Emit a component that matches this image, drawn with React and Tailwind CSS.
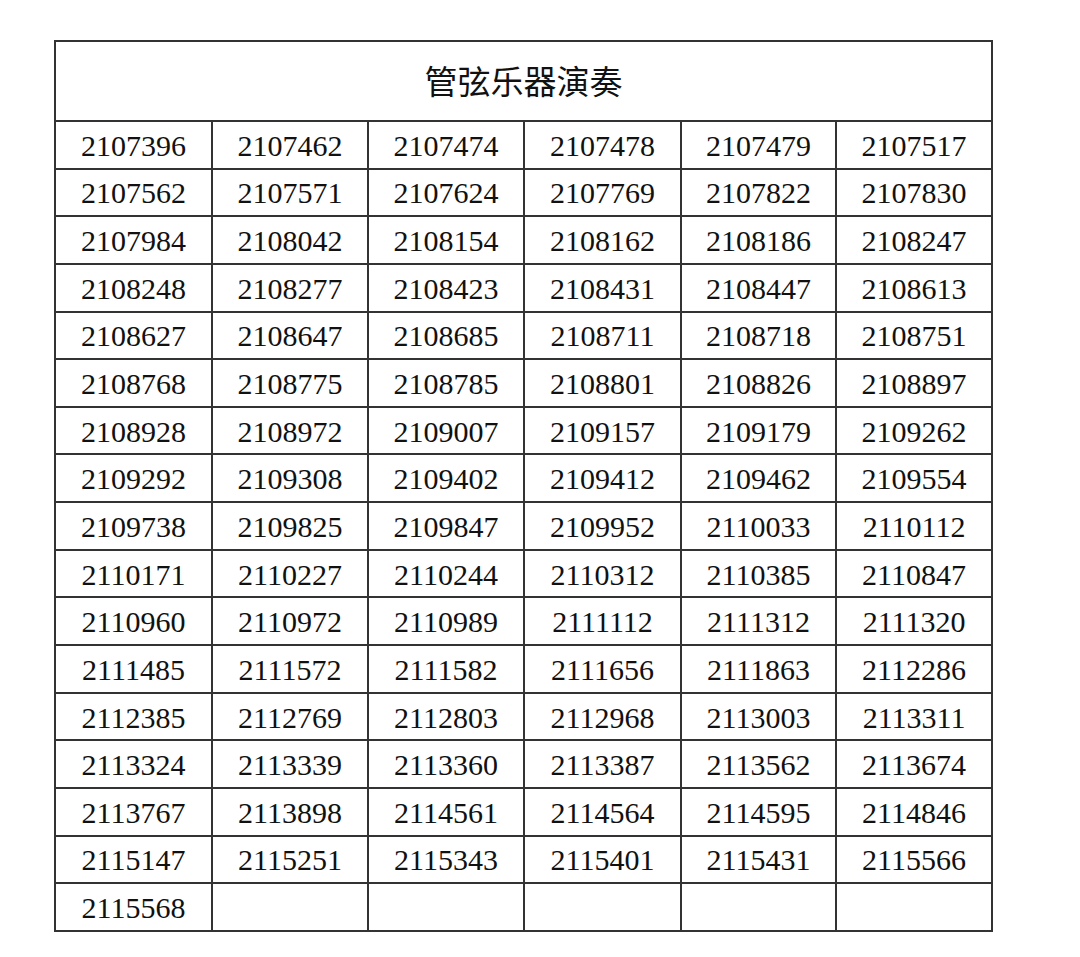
import React from 'react';

const rows = [
  ['2107396', '2107462', '2107474', '2107478', '2107479', '2107517'],
  ['2107562', '2107571', '2107624', '2107769', '2107822', '2107830'],
  ['2107984', '2108042', '2108154', '2108162', '2108186', '2108247'],
  ['2108248', '2108277', '2108423', '2108431', '2108447', '2108613'],
  ['2108627', '2108647', '2108685', '2108711', '2108718', '2108751'],
  ['2108768', '2108775', '2108785', '2108801', '2108826', '2108897'],
  ['2108928', '2108972', '2109007', '2109157', '2109179', '2109262'],
  ['2109292', '2109308', '2109402', '2109412', '2109462', '2109554'],
  ['2109738', '2109825', '2109847', '2109952', '2110033', '2110112'],
  ['2110171', '2110227', '2110244', '2110312', '2110385', '2110847'],
  ['2110960', '2110972', '2110989', '2111112', '2111312', '2111320'],
  ['2111485', '2111572', '2111582', '2111656', '2111863', '2112286'],
  ['2112385', '2112769', '2112803', '2112968', '2113003', '2113311'],
  ['2113324', '2113339', '2113360', '2113387', '2113562', '2113674'],
  ['2113767', '2113898', '2114561', '2114564', '2114595', '2114846'],
  ['2115147', '2115251', '2115343', '2115401', '2115431', '2115566'],
  ['2115568', '', '', '', '', ''],
];

export default function App() {
  return (
    <div className="w-[1080px] h-[957px] bg-white overflow-hidden pt-[40px] pl-[54px]">
      <table className="table-fixed border-collapse w-[939px] text-[#111]">
        <colgroup>
          <col className="w-[157px]" />
          <col className="w-[156px]" />
          <col className="w-[156px]" />
          <col className="w-[157px]" />
          <col className="w-[155px]" />
          <col className="w-[156px]" />
        </colgroup>
        <thead>
          <tr className="h-[80px]">
            <th
              colSpan={6}
              className="border-2 border-[#333] p-0 pb-[2px] text-center font-normal text-[33px] leading-none font-['Noto_Sans_CJK_SC',sans-serif]"
            >
              管弦乐器演奏
            </th>
          </tr>
        </thead>
        <tbody>
          {rows.map((row, i) => (
            <tr key={i} className="h-[47.65px]">
              {row.map((num, j) => (
                <td
                  key={j}
                  className="border-2 border-[#333] p-0 pt-[2px] text-center text-[30px] leading-none font-['Liberation_Serif',serif]"
                >
                  {num}
                </td>
              ))}
            </tr>
          ))}
        </tbody>
      </table>
    </div>
  );
}
